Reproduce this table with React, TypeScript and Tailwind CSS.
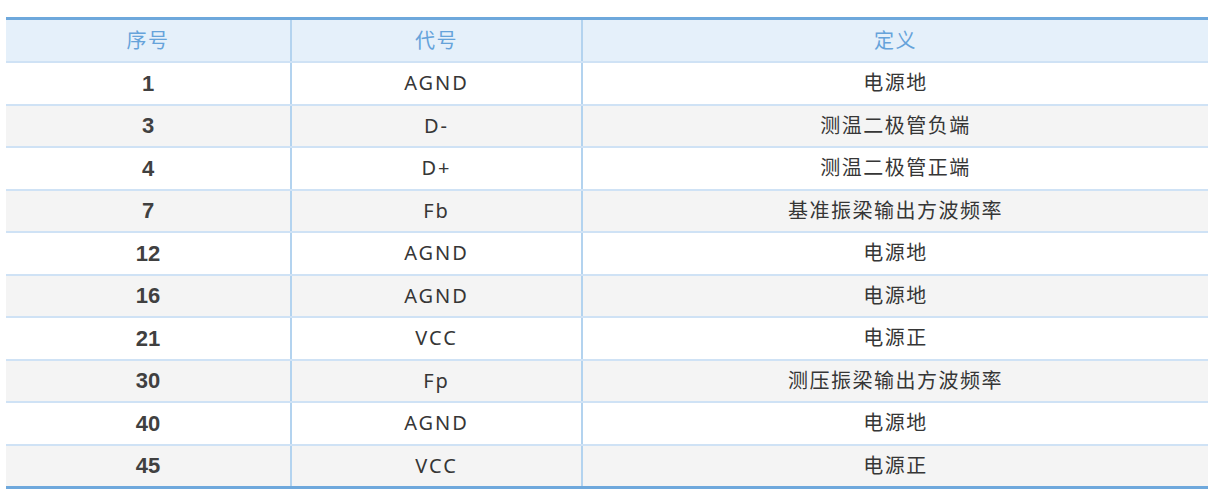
import React from 'react';

const rows: [string, string, string][] = [
  ['1', 'AGND', '电源地'],
  ['3', 'D-', '测温二极管负端'],
  ['4', 'D+', '测温二极管正端'],
  ['7', 'Fb', '基准振梁输出方波频率'],
  ['12', 'AGND', '电源地'],
  ['16', 'AGND', '电源地'],
  ['21', 'VCC', '电源正'],
  ['30', 'Fp', '测压振梁输出方波频率'],
  ['40', 'AGND', '电源地'],
  ['45', 'VCC', '电源正'],
];

const cjk = "font-['Noto_Sans','Noto_Sans_CJK_SC',sans-serif]";

export default function App() {
  return (
    <div className="w-[1213px] h-[492px] bg-white pt-[17px] pl-[6px]">
      <div className="w-[1202px] border-t-[3px] border-b-[3px] border-[#6ea8dc]">
        {/* Header */}
        <div
          className={`grid grid-cols-[286px_291px_1fr] h-[41px] bg-[#e5f0fa] text-[#66a3da] text-[20px] tracking-[1.5px] ${cjk}`}
        >
          <div className="flex items-center justify-center border-r-2 border-[#b3d3ef]">序号</div>
          <div className="flex items-center justify-center border-r-2 border-[#b3d3ef]">代号</div>
          <div className="flex items-center justify-center">定义</div>
        </div>

        {/* Body */}
        {rows.map(([no, code, def], i) => (
          <div
            key={i}
            className={`grid grid-cols-[286px_291px_1fr] h-[42.5px] border-t-2 border-[#cfe2f5] text-[#363636] ${
              i % 2 === 1 ? 'bg-[#f4f4f4]' : 'bg-white'
            }`}
          >
            <div className="flex items-center justify-center border-r-2 border-[#b3d3ef] font-['Liberation_Sans',Arial,sans-serif] font-bold text-[22px] text-[#404040]">
              {no}
            </div>
            <div
              className={`flex items-center justify-center border-r-2 border-[#b3d3ef] text-[20px] tracking-[2px] ${cjk}`}
            >
              {code}
            </div>
            <div className={`flex items-center justify-center text-[20px] tracking-[1.5px] ${cjk}`}>{def}</div>
          </div>
        ))}
      </div>
    </div>
  );
}
